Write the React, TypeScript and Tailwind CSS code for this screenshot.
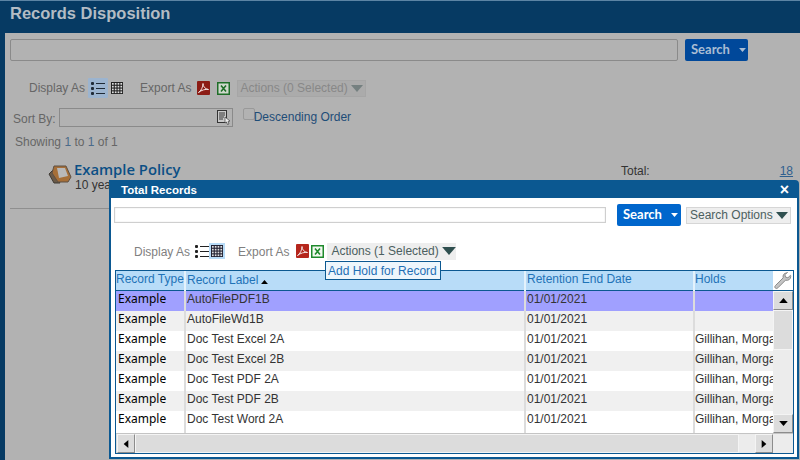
import React from "react";

const arial = "font-['Liberation_Sans',Arial,sans-serif]";

const Caret: React.FC<{ className: string }> = ({ className }) => (
  <svg viewBox="0 0 12 7" className={className}>
    <path d="M0 0h12L6 7z" fill="currentColor" />
  </svg>
);

const ListIcon: React.FC<{ color: string }> = ({ color }) => (
  <svg width="14" height="14" viewBox="0 0 14 14">
    <g fill={color}>
      <rect x="0" y="1" width="3" height="3" rx="1" />
      <rect x="0" y="6" width="3" height="3" rx="1" />
      <rect x="0" y="11" width="3" height="3" rx="1" />
      <rect x="5" y="2" width="9" height="1" />
      <rect x="5" y="7" width="9" height="1" />
      <rect x="5" y="12" width="9" height="1" />
    </g>
  </svg>
);

const GridIcon: React.FC<{ color: string }> = ({ color }) => (
  <svg width="12" height="12" viewBox="0 0 12 12">
    <rect width="12" height="12" fill={color} />
    <g fill="#fff" opacity="0.85">
      {[1, 3.8, 6.6, 9.4].map((x) =>
        [1, 3.8, 6.6, 9.4].map((y) => <rect key={`${x}-${y}`} x={x} y={y} width="1.7" height="1.7" />),
      )}
    </g>
  </svg>
);

const PdfIcon: React.FC<{ bg: string }> = ({ bg }) => (
  <svg width="13" height="14" viewBox="0 0 13 14">
    <rect width="13" height="14" rx="1" fill={bg} />
    <path d="M1.5 11.5C4 10 6 6 6 2.5c0 3 2 5.5 5.5 6-3-.5-7 .5-10 3z" fill="none" stroke="#f4e4e4" strokeWidth="1" />
  </svg>
);

const ExcelIcon: React.FC<{ border: string; fill: string }> = ({ border, fill }) => (
  <svg width="13" height="13" viewBox="0 0 13 13">
    <rect x="0.75" y="0.75" width="11.5" height="11.5" fill={fill} stroke={border} strokeWidth="1.5" />
    <path d="M4 3.5l5 6M9 3.5l-5 6" stroke={border} strokeWidth="1.6" />
  </svg>
);

const SortIcon: React.FC = () => (
  <svg width="14" height="15" viewBox="0 0 14 15">
    <rect x="0.5" y="0.5" width="9" height="12" fill="#c9c9c9" stroke="#333" />
    <path d="M2 3h6M2 5h6M2 7h5M2 9h4" stroke="#333" />
    <path d="M8 7l5 4-2 .5 1 2.5-1.5.5-1-2.5L8 13z" fill="#eee" stroke="#444" strokeWidth="0.7" />
  </svg>
);

const FolderIcon: React.FC = () => (
  <svg width="24" height="20" viewBox="0 0 24 20">
    <path d="M1 9l5-5 3 9 3 5-6 0z" fill="#6a5a48" stroke="#3f3a34" />
    <path d="M6 1h12l5 11-3 5H10L4 8z" fill="#a66f38" stroke="#5d5045" />
    <path d="M9 3h8l3 8-9 2z" fill="#b9b9b9" />
  </svg>
);

const WrenchIcon: React.FC = () => (
  <svg width="18" height="18" viewBox="0 0 18 18">
    <path
      d="M12.5 1C10 1 8.5 3.2 9.2 5.8L1.6 13.4c-1 1-1 1.8-.3 2.6.8.8 1.7.7 2.6-.2l7.6-7.6c2.8.7 5.2-1 5.2-3.7 0-.5 0-.8-.2-1.2l-2.6 2.5-2.4-.7-.6-2.3 2.5-2.5C13.2 1 12.9 1 12.5 1z"
      fill="#c4c4c4"
      stroke="#8a8a8a"
    />
  </svg>
);

const TreeRows: [string, string, string][] = [
  ["AutoFilePDF1B", "01/01/2021", ""],
  ["AutoFileWd1B", "01/01/2021", ""],
  ["Doc Test Excel 2A", "01/01/2021", "Gillihan, Morgan"],
  ["Doc Test Excel 2B", "01/01/2021", "Gillihan, Morgan"],
  ["Doc Test PDF 2A", "01/01/2021", "Gillihan, Morgan"],
  ["Doc Test PDF 2B", "01/01/2021", "Gillihan, Morgan"],
  ["Doc Test Word 2A", "01/01/2021", "Gillihan, Morgan"],
];

const colClass = "grid grid-cols-[70px_340px_169px_78px]";

const rowBg = (i: number) => {
  if (i === 0) return "bg-[#a0a0ff]";
  return i % 2 === 1 ? "bg-[#f0f0f0]" : "bg-white";
};

const cell = "overflow-hidden whitespace-nowrap border-r-2 border-[#dcdcdc] pl-[1px] leading-[16px]";

const ScrollButton: React.FC<{ children: React.ReactNode; className?: string }> = ({ children, className }) => (
  <div className={`flex items-center justify-center border border-b-[#8c8c8c] border-l-[#f4f4f4] border-r-[#8c8c8c] border-t-[#f4f4f4] bg-[#dcdcdc] text-black ${className ?? ""}`}>
    {children}
  </div>
);

const RecordsModal: React.FC = () => (
  <div className={`absolute left-[109px] top-[180px] flex h-[279px] w-[690px] flex-col rounded-tr-[4px] border-2 border-[#0b5891] bg-white ${arial}`}>
    <div className="flex h-[16px] shrink-0 items-center justify-between bg-[#0b5891] pl-[10px] pr-[8px] text-[11.5px] font-bold leading-[14px] text-white">
      <span className="pb-[1px]">Total Records</span>
      <span className="text-[16px] leading-none">×</span>
    </div>

    <div className="mt-[6px] flex h-[22px] items-center pl-[3px]">
      <div className="h-[16px] w-[492px] border border-[#cfcfcf] bg-white shadow-[inset_0_0_1px_#bbb]" />
      <div className="ml-[11px] flex h-[22px] w-[64px] items-center gap-[9px] rounded-[2px] bg-[#0066cc] pl-[6px] font-['Lato',sans-serif] text-[13px] font-bold text-white">
        Search
        <Caret className="h-[4px] w-[7px] text-white" />
      </div>
      <div className="ml-[5px] flex h-[17px] w-[105px] items-center gap-[3px] border border-[#d6d6d6] bg-[#eeeeee] pl-[3px] text-[12px] text-[#4c6060]">
        Search Options
        <Caret className="h-[7px] w-[12px] text-[#2f4f4f]" />
      </div>
    </div>

    <div className="mt-[16px] flex h-[18px] items-center pl-[23px] text-[12px] text-[#808080]">
      <span className="pt-[1px]">Display As</span>
      <span className="ml-[5px]">
        <ListIcon color="#222" />
      </span>
      <span className="flex h-[16px] w-[16px] items-center justify-center bg-[#b8dcf8]">
        <GridIcon color="#223" />
      </span>
      <span className="ml-[13px] pt-[1px]">Export As</span>
      <span className="ml-[7px]">
        <PdfIcon bg="#b5261c" />
      </span>
      <span className="ml-[2px]">
        <ExcelIcon border="#1f8a2c" fill="#f2f8f0" />
      </span>
      <div className="ml-[3px] flex h-[17px] w-[129px] items-center gap-[3px] bg-[#eeeeee] pl-[4px] text-[#4c6060]">
        Actions (1 Selected)
        <Caret className="h-[8px] w-[14px] text-[#2f4f4f]" />
      </div>
    </div>

    <div className="ml-[4px] mt-[10px] flex h-[184px] w-[679px] border border-[#0b5891]">
      <div className="flex w-[658px] flex-col">
        <div className={`${colClass} h-[20px] shrink-0 border-b border-[#0b5891] bg-[#b8dcf8] text-[12px] text-[#1f73b7]`}>
          <div className="overflow-hidden whitespace-nowrap border-r-2 border-[#e4f2fc] leading-[16px]">Record Type</div>
          <div className="flex items-center gap-[3px] border-r-2 border-[#e4f2fc] pb-[3px] pl-[1px]">
            Record Label
            <Caret className="mt-[3px] h-[4px] w-[7px] rotate-180 text-black" />
          </div>
          <div className="border-r-2 border-[#e4f2fc] pl-[1px] leading-[16px]">Retention End Date</div>
          <div className="leading-[16px]">Holds</div>
        </div>
        <div className="flex-1 overflow-hidden bg-white">
          {TreeRows.map((row, i) => (
            <div key={row[0]} className={`${colClass} h-[20px] text-[12px] text-[#333] ${rowBg(i)}`}>
              <div className={`${cell} pl-[2px] font-['Noto_Sans',sans-serif] text-black`}>Example</div>
              <div className={cell}>{row[0]}</div>
              <div className={cell}>{row[1]}</div>
              <div className="overflow-hidden whitespace-nowrap leading-[16px]">{row[2]}</div>
            </div>
          ))}
          <div className={`${colClass} h-[3px]`}>
            <div className="border-r-2 border-[#dcdcdc]" />
            <div className="border-r-2 border-[#dcdcdc]" />
            <div className="border-r-2 border-[#dcdcdc]" />
          </div>
        </div>
        <div className="flex h-[20px] shrink-0 border-t border-[#c4c4c4] bg-[#dcdcdc] pl-[1px]">
          <ScrollButton className="w-[18px]">
            <Caret className="h-[8px] w-[8px] rotate-90" />
          </ScrollButton>
          <div className="flex-1 border border-[#f4f4f4]" />
          <div className="w-[16px] bg-[#ececec]" />
          <ScrollButton className="w-[18px]">
            <Caret className="h-[8px] w-[8px] -rotate-90" />
          </ScrollButton>
        </div>
      </div>

      <div className="flex w-[20px] flex-col">
        <div className="flex h-[20px] items-center justify-center border-b border-[#0b5891] bg-white">
          <WrenchIcon />
        </div>
        <div className="flex flex-1 flex-col bg-[#ececec]">
          <ScrollButton className="h-[19px]">
            <Caret className="h-[5px] w-[9px] rotate-180" />
          </ScrollButton>
          <div className="h-[40px] border border-[#f4f4f4] bg-[#dcdcdc]" />
          <div className="flex-1" />
          <ScrollButton className="h-[19px]">
            <Caret className="h-[5px] w-[9px]" />
          </ScrollButton>
        </div>
        <div className="h-[20px] border-t border-[#c4c4c4] bg-[#ececec]" />
      </div>
    </div>
  </div>
);

export default function App() {
  return (
    <div className={`relative h-[460px] w-[800px] overflow-hidden bg-[#b2b2b2] ${arial} text-[12px] text-[#666]`}>
      <div className="flex h-[33px] items-center border-t border-[#5c84a4] bg-[#063a63] pb-[8px] pl-[10px] text-[16.5px] font-bold text-[#b3bcc4]">
        Records Disposition
      </div>

      <div className="h-[427px] border-l-[5px] border-[#063a63] pl-[5px] pt-[6px]">
        <div className="flex h-[22px]">
          <div className="h-[22px] w-[668px] rounded-[2px] border border-[#8a8a8a]" />
          <div className="ml-[7px] flex w-[63px] items-center gap-[9px] rounded-[2px] bg-[#00489a] pl-[6px] font-['Lato',sans-serif] text-[13px] font-bold text-[#a9bdd4]">
            Search
            <Caret className="h-[4px] w-[7px] text-[#a9bdd4]" />
          </div>
        </div>

        <div className="mt-[17px] flex h-[20px] items-center pl-[19px]">
          <span>Display As</span>
          <span className="ml-[3px] flex h-[20px] w-[20px] items-center justify-center rounded-[1px] bg-[#9cb4cf]">
            <ListIcon color="#1f2a36" />
          </span>
          <span className="ml-[3px]">
            <GridIcon color="#222" />
          </span>
          <span className="ml-[17px]">Export As</span>
          <span className="ml-[6px]">
            <PdfIcon bg="#8c1c15" />
          </span>
          <span className="ml-[7px]">
            <ExcelIcon border="#1f6e28" fill="#cfd8cc" />
          </span>
          <div className="ml-[7px] flex h-[17px] w-[129px] items-center gap-[3px] border border-[#a6a6a6] bg-[#ababab] pl-[2px] text-[#888]">
            Actions (0 Selected)
            <Caret className="h-[7px] w-[12px] text-[#758080]" />
          </div>
        </div>

        <div className="mt-[10px] flex h-[20px] pl-[3px]">
          <span className="pt-[2px]">Sort By:</span>
          <div className="ml-[3px] flex h-[19px] w-[174px] items-center justify-end border border-[#8a8a8a] pr-[1px]">
            <SortIcon />
          </div>
          <div className="ml-[10px] h-[12px] w-[12px] rounded-[2px] border border-[#999]" />
          <span className="-ml-[1px] text-[#1e4d78]">Descending Order</span>
        </div>

        <div className="mt-[7px] pl-[5px] leading-[14px]">
          Showing <span className="text-[#4a6a8a]">1</span> to <span className="text-[#4a6a8a]">1</span> of 1
        </div>

        <div className="mt-[10px] flex h-[31px]">
          <div className="ml-[38px] mt-[6px]">
            <FolderIcon />
          </div>
          <div className="ml-[2px] w-[546px] pt-[1px]">
            <div className="font-['Open_Sans',sans-serif] text-[14.8px] font-semibold leading-[18px] text-[#0b4f85]">
              Example Policy
            </div>
            <div className="pl-[1px] leading-[14px] text-[#333]">10 years</div>
          </div>
          <span className="ml-[1px] pt-[3px] text-[#333]">Total:</span>
          <span className="ml-[130px] pt-[3px] text-[#2f5f8f] underline">18</span>
        </div>

        <div className="mt-[18px] h-px w-[780px] bg-[#8f8f8f]" />
      </div>

      <RecordsModal />

      <div className="absolute left-[325px] top-[261px] flex h-[19px] w-[116px] items-center border border-[#0b5891] bg-[#eef6fc] pl-[2px] text-[12px] text-[#1f6fb5]">
        Add Hold for Record
      </div>
    </div>
  );
}
